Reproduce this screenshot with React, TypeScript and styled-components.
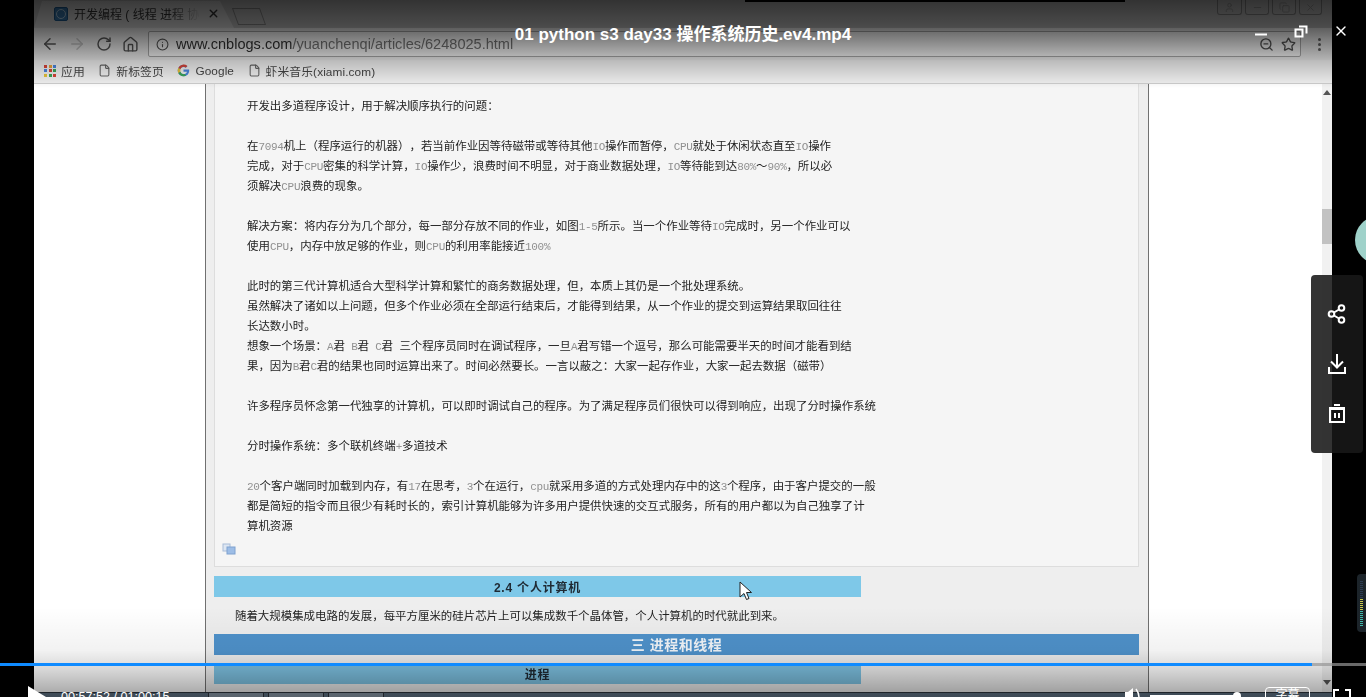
import React from 'react';
import styled, { createGlobalStyle } from 'styled-components';
import { ArrowLeft, ArrowRight, RotateCw, Home, Info, ZoomOut, Star, File, X, User, Minus, Copy } from 'lucide-react';

const GlobalStyle = createGlobalStyle`
  html, body { margin: 0; padding: 0; background: #000; overflow: hidden; }
  * { box-sizing: border-box; }
`;

const CJK = `'Liberation Sans', 'Noto Sans CJK SC', sans-serif`;

const Stage = styled.div`
  position: relative;
  width: 1366px;
  height: 697px;
  background: #000;
  overflow: hidden;
  font-family: ${CJK};
  text-spacing-trim: space-all;
`;

const Video = styled.div`
  width: 1298px;
  height: 697px;
  margin-left: 34px;
  display: flex;
  flex-direction: column;
  filter: blur(0.45px);
`;

/* browser chrome inside the video */
const TabStrip = styled.div`
  height: 28px;
  flex: none;
  display: flex;
  align-items: flex-end;
  justify-content: space-between;
  background: #c4c4c4;
`;

const TabGroup = styled.div`
  display: flex;
  align-items: flex-end;
  height: 100%;
`;

const ActiveTab = styled.div`
  width: 200px;
  height: 27px;
  display: flex;
  align-items: center;
  gap: 6px;
  padding: 0 14px 2px 20px;
  background: #dcdcdc;
  clip-path: polygon(0 100%, 8px 0, 186px 0, 200px 100%);
`;

const Favicon = styled.span`
  width: 14px;
  height: 14px;
  flex: none;
  display: flex;
  align-items: center;
  justify-content: center;
  border-radius: 2px;
  background: #3a7db5;
  border: 1px solid #1f5d92;
  &::after {
    content: '';
    width: 8px;
    height: 8px;
    border-radius: 50%;
    border: 1px solid #b8d8ee;
  }
`;

const TabTitle = styled.span`
  flex: 1;
  font-size: 12px;
  color: #333;
  white-space: nowrap;
  overflow: hidden;
  mask-image: linear-gradient(to right, #000 75%, transparent 100%);
`;

const NewTab = styled.div`
  width: 28px;
  height: 17px;
  margin: 0 0 3px 1px;
  background: #c4c4c4;
  border: 1px solid #8a8a8a;
  transform: skewX(20deg);
`;

const WindowButtons = styled.div`
  display: flex;
  gap: 3px;
  align-self: flex-start;
  margin-right: 10px;
`;

const WindowButton = styled.div<{ $w: number }>`
  width: ${p => p.$w}px;
  height: 15px;
  display: flex;
  align-items: center;
  justify-content: center;
  border: 1px solid #8a8a8a;
  border-top: none;
  border-radius: 0 0 3px 3px;
  color: #9a9a9a;
`;

const Toolbar = styled.div`
  height: 32px;
  flex: none;
  display: flex;
  align-items: center;
  padding: 0 4px 0 2px;
  background: #ececec;
`;

const NavIcon = styled.span<{ $dim?: boolean }>`
  width: 27px;
  display: flex;
  justify-content: center;
  color: ${p => (p.$dim ? '#c0c0c0' : '#555')};
`;

const AddressBar = styled.div`
  flex: 1;
  height: 26px;
  margin-left: 4px;
  display: flex;
  align-items: center;
  gap: 7px;
  padding: 0 4px 0 7px;
  background: #f8f8f8;
  border: 1px solid #a8a8a8;
  border-radius: 2px;
`;

const Url = styled.span`
  flex: 1;
  font-size: 14.55px;
  color: #333;
  white-space: nowrap;
`;

const UrlRest = styled.span`
  color: #777;
`;

const Dots = styled.span`
  width: 18px;
  margin-left: 9px;
  display: flex;
  flex-direction: column;
  align-items: center;
  gap: 2px;
  i {
    width: 3px;
    height: 3px;
    border-radius: 50%;
    background: #666;
  }
`;

const BookmarkBar = styled.div`
  height: 24px;
  flex: none;
  display: flex;
  align-items: center;
  gap: 13.5px;
  padding: 0 0 2px 10px;
  background: #f2f2f2;
  border-bottom: 1px solid #cfcfcf;
`;

const Bookmark = styled.span`
  display: flex;
  align-items: center;
  gap: 5px;
  font-size: 11.8px;
  letter-spacing: 0.1px;
  color: #444;
  white-space: nowrap;
`;

const AppsGrid = styled.span`
  display: grid;
  grid-template-columns: repeat(3, 3px);
  gap: 1.5px;
`;

const AppsDot = styled.i<{ $c: string }>`
  width: 3px;
  height: 3px;
  background: ${p => p.$c};
`;

/* web page */
const Page = styled.div`
  flex: 1;
  min-height: 0;
  display: flex;
  background: #fff;
`;

const Margin = styled.div<{ $w: number }>`
  width: ${p => p.$w}px;
  flex: none;
`;

const Article = styled.div`
  width: 944px;
  flex: none;
  padding: 0 9px 0 8px;
  background: #eee;
  border-left: 1px solid #707070;
  border-right: 1px solid #707070;
`;

const CodeBox = styled.div`
  height: 483px;
  padding: 12px 0 0 32px;
  background: #f5f5f5;
  border: 1px solid #ddd;
  border-top: none;
`;

const Line = styled.div`
  height: 20px;
  line-height: 20px;
  font-size: 11.45px;
  color: #222;
  white-space: pre;
`;

const Mono = styled.span`
  font-family: 'Liberation Mono', monospace;
  font-size: 11px;
  letter-spacing: -0.3px;
  color: #909090;
`;

const CopyIcon = styled.div`
  margin: 5px 0 0 -25px;
  height: 14px;
`;

const SubBanner = styled.div<{ $mt: number }>`
  width: 647px;
  height: 21px;
  margin-top: ${p => p.$mt}px;
  display: flex;
  align-items: center;
  justify-content: center;
  background: ${p => (p.$mt > 8 ? '#7ec8e8' : '#7cc0e0')};
  font-size: 12px;
  font-weight: 700;
  letter-spacing: 0.8px;
  color: #1f2a33;
`;

const Paragraph = styled.div`
  height: 37px;
  padding: 9px 0 0 21px;
  line-height: 20px;
  font-size: 11.45px;
  color: #222;
  white-space: nowrap;
`;

const SectionBanner = styled.div`
  height: 21px;
  display: flex;
  align-items: center;
  justify-content: center;
  padding-bottom: 2px;
  background: #4f92cb;
  font-size: 14px;
  font-weight: 700;
  letter-spacing: 0.5px;
  color: #f2f6fa;
`;

const Scrollbar = styled.div`
  width: 10px;
  flex: none;
  display: flex;
  flex-direction: column;
  align-items: center;
  padding: 6px 0 7px;
  background: #f1f1f1;
`;

const ScrollArrow = styled.div<{ $down?: boolean }>`
  width: 0;
  height: 0;
  border-left: 4px solid transparent;
  border-right: 4px solid transparent;
  ${p => (p.$down ? 'border-top: 5px solid #555;' : 'border-bottom: 5px solid #555;')}
`;

const ScrollThumb = styled.div`
  width: 10px;
  height: 35px;
  margin-top: 114px;
  margin-bottom: auto;
  background: #c2c2c2;
`;

/* windows taskbar at the bottom of the video */
const Taskbar = styled.div`
  height: 5px;
  flex: none;
  display: flex;
  gap: 4px;
  padding-left: 174px;
  background: #5c6f80;
  border-top: 1px solid #2c343c;
`;

const TaskItem = styled.div`
  width: 56px;
  background: #8494a2;
  border-left: 1px solid #2c343c;
  border-right: 1px solid #2c343c;
`;

/* player overlay */
const TopShade = styled.div`
  position: absolute;
  top: 0;
  left: 34px;
  width: 1298px;
  height: 88px;
  background: linear-gradient(to bottom, rgba(0, 0, 0, 0.74) 0%, rgba(0, 0, 0, 0.62) 30%, rgba(0, 0, 0, 0.22) 70%, rgba(0, 0, 0, 0) 100%);
`;

const BottomShade = styled.div`
  position: absolute;
  bottom: 0;
  left: 34px;
  width: 1298px;
  height: 90px;
  background: linear-gradient(to bottom, rgba(0, 0, 0, 0) 0%, rgba(0, 0, 0, 0.05) 48%, rgba(0, 0, 0, 0.16) 70%, rgba(0, 0, 0, 0.32) 94%);
`;

const TopEdge = styled.div`
  position: absolute;
  top: 0;
  left: 745px;
  width: 380px;
  height: 2px;
  background: #000;
`;

const VideoTitle = styled.div`
  position: absolute;
  top: 24px;
  left: 0;
  width: 1366px;
  text-align: center;
  line-height: 22px;
  font-size: 17px;
  font-weight: 700;
  color: #fff;
`;

const PlayerButton = styled.span<{ $x: number; $y: number }>`
  position: absolute;
  left: ${p => p.$x}px;
  top: ${p => p.$y}px;
  display: flex;
  color: #fff;
`;

const ProgressTrack = styled.div`
  position: absolute;
  left: 0;
  top: 663px;
  width: 1366px;
  height: 3px;
  background: rgba(150, 150, 150, 0.7);
`;

const ProgressFill = styled.div`
  height: 100%;
  background: #0f8bff;
`;

const PlayTriangle = styled.div`
  position: absolute;
  left: 28px;
  top: 686px;
  width: 0;
  height: 0;
  border-left: 18px solid #fff;
  border-top: 11px solid transparent;
  border-bottom: 11px solid transparent;
`;

const TimeCode = styled.div`
  position: absolute;
  left: 61px;
  top: 690px;
  font-size: 12.6px;
  line-height: 14px;
  color: #fff;
  white-space: nowrap;
`;

const VolumeTrack = styled.div`
  position: absolute;
  left: 1150px;
  top: 695px;
  width: 88px;
  height: 2px;
  background: #fff;
`;

const VolumeKnob = styled.div`
  position: absolute;
  left: 1233px;
  top: 692px;
  width: 8px;
  height: 8px;
  border-radius: 50%;
  background: #fff;
`;

const SubtitleButton = styled.div`
  position: absolute;
  left: 1265px;
  top: 687px;
  width: 45px;
  height: 24px;
  text-align: center;
  font-size: 12px;
  line-height: 14px;
  color: #fff;
  border: 1px solid #fff;
  border-radius: 4px;
`;

const SidePanel = styled.div`
  position: absolute;
  left: 1311px;
  top: 275px;
  width: 52px;
  height: 178px;
  display: flex;
  flex-direction: column;
  align-items: center;
  gap: 29px;
  padding: 29px 0 0 0;
  color: #fff;
  background: rgba(24, 24, 24, 0.88);
  border-radius: 4px;
`;

const TealDisc = styled.div`
  position: absolute;
  left: 1355px;
  top: 216px;
  width: 48px;
  height: 48px;
  border-radius: 50%;
  background: #9fd2ca;
`;

const Meter = styled.div`
  position: absolute;
  left: 1357px;
  top: 574px;
  width: 12px;
  height: 58px;
  display: flex;
  flex-direction: column;
  justify-content: flex-end;
  gap: 1px;
  padding: 4px 6px 6px 3px;
  background: #1c242a;
  border-radius: 4px;
`;

const MeterBar = styled.i<{ $c: string }>`
  height: 1px;
  flex: none;
  background: ${p => p.$c};
`;

const lines = [
  '开发出多道程序设计，用于解决顺序执行的问题：',
  '',
  '在7094机上（程序运行的机器），若当前作业因等待磁带或等待其他IO操作而暂停，CPU就处于休闲状态直至IO操作',
  '完成，对于CPU密集的科学计算，IO操作少，浪费时间不明显，对于商业数据处理，IO等待能到达80%～90%，所以必',
  '须解决CPU浪费的现象。',
  '',
  '解决方案：将内存分为几个部分，每一部分存放不同的作业，如图1-5所示。当一个作业等待IO完成时，另一个作业可以',
  '使用CPU，内存中放足够的作业，则CPU的利用率能接近100%',
  '',
  '此时的第三代计算机适合大型科学计算和繁忙的商务数据处理，但，本质上其仍是一个批处理系统。',
  '虽然解决了诸如以上问题，但多个作业必须在全部运行结束后，才能得到结果，从一个作业的提交到运算结果取回往往',
  '长达数小时。',
  '想象一个场景：A君  B君  C君  三个程序员同时在调试程序，一旦A君写错一个逗号，那么可能需要半天的时间才能看到结',
  '果，因为B君C君的结果也同时运算出来了。时间必然要长。一言以蔽之：大家一起存作业，大家一起去数据（磁带）',
  '',
  '许多程序员怀念第一代独享的计算机，可以即时调试自己的程序。为了满足程序员们很快可以得到响应，出现了分时操作系统',
  '',
  '分时操作系统：多个联机终端+多道技术',
  '',
  '20个客户端同时加载到内存，有17在思考，3个在运行，cpu就采用多道的方式处理内存中的这3个程序，由于客户提交的一般',
  '都是简短的指令而且很少有耗时长的，索引计算机能够为许多用户提供快速的交互式服务，所有的用户都以为自己独享了计',
  '算机资源',
];

const renderLine = (text: string) =>
  text.split(/([A-Za-z0-9%+\-]+)/).map((part, i) => (i % 2 ? <Mono key={i}>{part}</Mono> : part));

const appsColors = ['#d9453a', '#e8a33a', '#4a86e0', '#4a86e0', '#d9453a', '#3aa757', '#e8c33a', '#3aa757', '#d9453a'];
const meterColors = [
  ...Array(9).fill('#2c3c52'),
  ...Array(6).fill('#c8c850'),
  ...Array(8).fill('#3fb6a8'),
];

const GoogleG = () => (
  <svg width="13" height="13" viewBox="0 0 24 24">
    <path d="M12 10v4.2h6.4c-.6 2.6-3 4.3-6.4 4.3a6.5 6.5 0 1 1 0-13c1.7 0 3.1.6 4.2 1.6l3-3A10.7 10.7 0 0 0 12 1.3a10.7 10.7 0 1 0 0 21.4c6.2 0 10.5-4.4 10.5-10.6 0-.7-.1-1.4-.2-2.1z" fill="#4a86e0" />
    <path d="M2.6 7l3.6 2.7A6.5 6.5 0 0 1 16.2 6.6l3-3A10.7 10.7 0 0 0 2.6 7z" fill="#d9453a" />
    <path d="M2.6 17l3.6-2.7 0-4.6L2.6 7a10.7 10.7 0 0 0 0 10z" fill="#e8c33a" />
    <path d="M2.6 17a10.7 10.7 0 0 0 14.6 4.3l-3-2.9a6.5 6.5 0 0 1-8-4.1z" fill="#3aa757" />
  </svg>
);

const ShareIcon = () => (
  <svg width="20" height="20" viewBox="0 0 20 20" fill="none" stroke="#fff" strokeWidth="2">
    <circle cx="4.5" cy="10" r="2.8" />
    <circle cx="14.5" cy="4" r="2.8" />
    <circle cx="14.5" cy="16" r="2.8" />
    <path d="M7 8.5l5-3M7 11.5l5 3" />
  </svg>
);

const DownloadIcon = () => (
  <svg width="20" height="22" viewBox="0 0 20 22" fill="none" stroke="#fff" strokeWidth="2">
    <path d="M10 1v13M4 8.5l6 6 6-6M2 14v6h16v-6" />
  </svg>
);

const TrashIcon = () => (
  <svg width="18" height="20" viewBox="0 0 18 20" fill="none" stroke="#fff" strokeWidth="2">
    <path d="M1 4h16M6 1h6" />
    <rect x="2" y="5" width="14" height="13" />
    <path d="M7 9v5M11 9v5" />
  </svg>
);

const Cursor = () => (
  <svg width="14" height="20" viewBox="0 0 14 20">
    <path d="M1 1v15l4-3.5 2.5 6 2.5-1-2.5-6h5z" fill="#fff" stroke="#222" strokeWidth="1" />
  </svg>
);

const PageImage = () => (
  <svg width="14" height="12" viewBox="0 0 14 12">
    <rect x="1" y="1" width="7" height="7" fill="#dde6f2" stroke="#a8bcd8" />
    <rect x="5" y="4" width="8" height="7" fill="#9dbde6" stroke="#7fa2d0" />
  </svg>
);

const App: React.FC = () => {
  return (
    <Stage>
      <GlobalStyle />
      <Video>
        <TabStrip>
          <TabGroup>
            <ActiveTab>
              <Favicon />
              <TabTitle>开发编程 ( 线程 进程 协</TabTitle>
              <X size={13} color="#333" strokeWidth={2.5} />
            </ActiveTab>
            <NewTab />
          </TabGroup>
          <WindowButtons>
            <WindowButton $w={25}><User size={11} /></WindowButton>
            <WindowButton $w={24}><Minus size={11} /></WindowButton>
            <WindowButton $w={24}><Copy size={11} /></WindowButton>
            <WindowButton $w={23}><X size={11} /></WindowButton>
          </WindowButtons>
        </TabStrip>

        <Toolbar>
          <NavIcon><ArrowLeft size={18} strokeWidth={2} /></NavIcon>
          <NavIcon $dim><ArrowRight size={18} strokeWidth={2} /></NavIcon>
          <NavIcon><RotateCw size={16} strokeWidth={2.2} /></NavIcon>
          <NavIcon><Home size={17} strokeWidth={2} /></NavIcon>
          <AddressBar>
            <Info size={13} color="#555" />
            <Url>www.cnblogs.com<UrlRest>/yuanchenqi/articles/6248025.html</UrlRest></Url>
            <ZoomOut size={15} color="#555" strokeWidth={2.2} />
            <Star size={15} color="#555" strokeWidth={2.2} />
          </AddressBar>
          <Dots><i /><i /><i /></Dots>
        </Toolbar>

        <BookmarkBar>
          <Bookmark>
            <AppsGrid>{appsColors.map((c, i) => <AppsDot key={i} $c={c} />)}</AppsGrid>
            应用
          </Bookmark>
          <Bookmark><File size={13} color="#666" />新标签页</Bookmark>
          <Bookmark><GoogleG />Google</Bookmark>
          <Bookmark><File size={13} color="#666" />虾米音乐(xiami.com)</Bookmark>
        </BookmarkBar>

        <Page>
          <Margin $w={171} />
          <Article>
            <CodeBox>
              {lines.map((text, i) => <Line key={i}>{renderLine(text)}</Line>)}
              <CopyIcon><PageImage /></CopyIcon>
            </CodeBox>
            <SubBanner $mt={9}>2.4 个人计算机</SubBanner>
            <Paragraph>随着大规模集成电路的发展，每平方厘米的硅片芯片上可以集成数千个晶体管，个人计算机的时代就此到来。</Paragraph>
            <SectionBanner>三 进程和线程</SectionBanner>
            <SubBanner $mt={8}>进程</SubBanner>
          </Article>
          <Margin $w={173} />
          <Scrollbar>
            <ScrollArrow />
            <ScrollThumb />
            <ScrollArrow $down />
          </Scrollbar>
        </Page>

        <Taskbar>
          <TaskItem />
          <TaskItem />
          <TaskItem />
        </Taskbar>
      </Video>

      <TopShade />
      <BottomShade />
      <TopEdge />
      <VideoTitle>01 python s3 day33 操作系统历史.ev4.mp4</VideoTitle>

      <PlayerButton $x={1254} $y={28}>
        <svg width="14" height="8" viewBox="0 0 14 8"><path d="M1 6.5h12" stroke="#fff" strokeWidth="2" /></svg>
      </PlayerButton>
      <PlayerButton $x={1294} $y={25}>
        <svg width="14" height="14" viewBox="0 0 14 14" fill="none" stroke="#fff" strokeWidth="2">
          <rect x="1.5" y="4.5" width="7" height="7" />
          <path d="M5 1.5h7.5v7" />
        </svg>
      </PlayerButton>
      <PlayerButton $x={1333} $y={23}>
        <X size={16} strokeWidth={2} />
      </PlayerButton>

      <ProgressTrack><ProgressFill style={{ width: `${(1312 / 1366) * 100}%` }} /></ProgressTrack>

      <PlayTriangle />
      <TimeCode>00:57:52 / 01:00:15</TimeCode>
      <PlayerButton $x={1124} $y={687}>
        <svg width="18" height="14" viewBox="0 0 18 14">
          <path d="M1 5h3l5-4v13H1z" fill="#fff" />
          <path d="M12 2q3 4 3 9" stroke="#fff" strokeWidth="1.5" fill="none" />
        </svg>
      </PlayerButton>
      <VolumeTrack />
      <VolumeKnob />
      <SubtitleButton>字幕</SubtitleButton>
      <PlayerButton $x={1333} $y={689}>
        <svg width="18" height="10" viewBox="0 0 18 10" fill="none" stroke="#fff" strokeWidth="2">
          <path d="M1 9V1h5M12 1h5v8" />
        </svg>
      </PlayerButton>

      <TealDisc />
      <SidePanel>
        <ShareIcon />
        <DownloadIcon />
        <TrashIcon />
      </SidePanel>

      <Meter>{meterColors.map((c, i) => <MeterBar key={i} $c={c} />)}</Meter>

      <PlayerButton $x={739} $y={581}><Cursor /></PlayerButton>
    </Stage>
  );
};

export default App;
